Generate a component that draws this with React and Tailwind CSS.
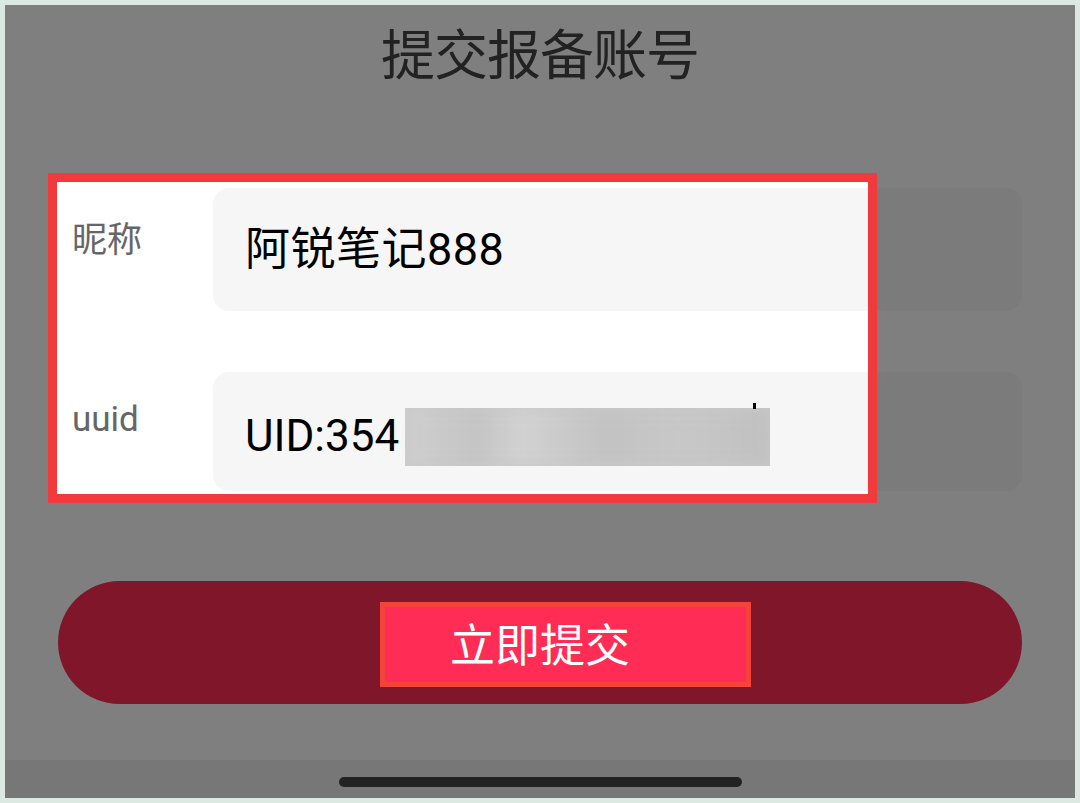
export default function App() {
  const cjk = { fontFamily: '"Noto Sans CJK SC", "Noto Sans", sans-serif' };
  const mixed = { fontFamily: 'Roboto, "Noto Sans CJK SC", sans-serif' };
  return (
    <div className="w-[1080px] h-[803px] bg-[#dbe9e2] p-[5px]">
      <div className="relative w-[1070px] h-[793px] bg-white overflow-hidden flex flex-col">
        {/* Title */}
        <div className="h-[93px] flex items-center justify-center shrink-0">
          <h1 className="text-[54px] leading-none text-[#444] tracking-[-1px]" style={cjk}>
            提交报备账号
          </h1>
        </div>

        {/* Form */}
        <div className="mt-[90px] flex flex-col gap-[61px] pl-[67px] pr-[53px]">
          <div className="flex items-start">
            <div className="w-[141px] pt-[31px] text-[35px] leading-none text-[#666]" style={cjk}>
              昵称
            </div>
            <div className="flex-1 h-[123px] rounded-[16px] bg-[#f6f6f6] flex items-center pl-[32px]">
              <span className="text-[45px] leading-none text-black tracking-[0.5px]" style={mixed}>
                阿锐笔记888
              </span>
            </div>
          </div>
          <div className="flex items-start">
            <div className="w-[141px] pt-[30px] text-[35px] leading-none text-[#666]" style={mixed}>
              uuid
            </div>
            <div className="relative flex-1 h-[119px] rounded-[16px] bg-[#f6f6f6] flex items-center pl-[32px] pt-[8px]">
              <span className="text-[44px] leading-none text-black" style={mixed}>
                UID:354
              </span>
              <div className="absolute left-[192px] top-[36px] w-[365px] h-[58px] bg-[#c9c9c9] overflow-hidden">
                <div className="w-full h-full blur-[8px] bg-[linear-gradient(90deg,#cfcfcf_0%,#c4c4c4_20%,#d2d2d2_32%,#c2c2c2_55%,#c8c8c8_75%,#c0c0c0_100%)]" />
              </div>
              <div className="absolute left-[540px] top-[31px] w-[3px] h-[6px] bg-black" />
            </div>
          </div>
        </div>

        {/* Button */}
        <div className="mt-[90px] mx-[53px] h-[123px] rounded-full bg-[#ff2c55] flex items-center justify-center">
          <span className="text-[45px] leading-none text-white" style={cjk}>
            立即提交
          </span>
        </div>

        <div className="flex-1" />

        {/* Bottom bar */}
        <div className="h-[38px] bg-[#eeeeee] shrink-0 flex justify-center">
          <div className="mt-[17px] w-[403px] h-[10px] rounded-full bg-[#444]" />
        </div>

        {/* Dim overlay with highlight holes */}
        <svg
          className="absolute inset-0 pointer-events-none"
          width="1070"
          height="793"
          viewBox="0 0 1070 793"
        >
          <path
            fillRule="evenodd"
            fill="rgba(0,0,0,0.5)"
            d="M0 0H1070V793H0Z M52 177H863V489H52Z M380 602H741V677H380Z"
          />
        </svg>

        {/* Highlight frames */}
        <div className="absolute left-[43px] top-[168px] w-[829px] h-[330px] border-[9px] border-[#f23a3d] pointer-events-none" />
        <div className="absolute left-[375px] top-[597px] w-[371px] h-[85px] border-[5px] border-[#f5433a] pointer-events-none" />
      </div>
    </div>
  );
}
